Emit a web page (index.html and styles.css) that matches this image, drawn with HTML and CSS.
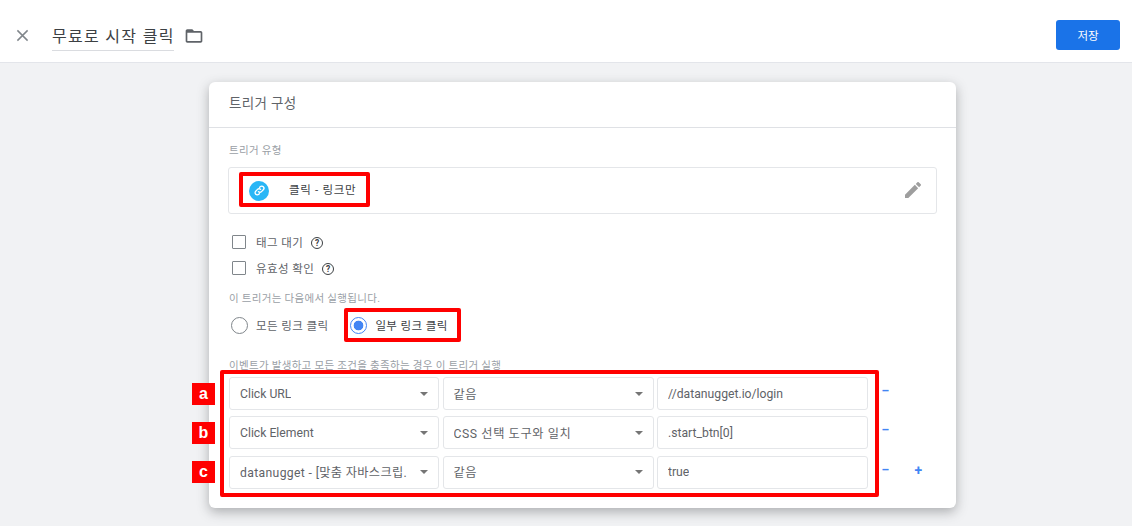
FILE: index.html
```html
<!DOCTYPE html>
<html lang="ko">
<head>
<meta charset="utf-8">
<title>무료로 시작 클릭</title>
<link rel="stylesheet" href="styles.css">
</head>
<body>
<header class="topbar">
  <svg class="close" viewBox="0 0 14 14" width="14" height="14"><path d="M1.5 1.5l11 11M12.5 1.5l-11 11" stroke="#80868b" stroke-width="1.6" fill="none"/></svg>
  <div class="title">무료로 시작 클릭</div>
  <svg class="folder" viewBox="0 0 24 24" width="20" height="20"><path fill="#5f6368" d="M20 6h-8l-2-2H4c-1.1 0-2 .9-2 2v12c0 1.1.9 2 2 2h16c1.1 0 2-.9 2-2V8c0-1.100-.9-2-2-2zm0 12H4V8h16v10z"/></svg>
  <button class="save">저장</button>
</header>
<main class="stage">
  <section class="card">
    <h2 class="card-title">트리거 구성</h2>
    <div class="card-body">
      <div class="caption">트리거 유형</div>
      <div class="type-box">
        <span class="type-icon">
          <svg viewBox="0 0 24 24" width="13" height="13"><path fill="none" stroke="#fff" stroke-width="2.400" stroke-linecap="round" d="M10 14a4 4 0 0 0 5.700 0l3.300-3.300a4 4 0 0 0-5.700-5.700l-1.300 1.300M14 10a4 4 0 0 0-5.700 0L5 13.300A4 4 0 0 0 10.700 19l1.300-1.300"/></svg>
        </span>
        <span class="type-name">클릭 - 링크만</span>
        <svg class="pencil" viewBox="3 3 18 18" width="16" height="16"><path fill="#9e9e9e" d="M3 17.250V21h3.750L17.810 9.940l-3.750-3.750L3 17.250zM20.710 7.040a1 1 0 0 0 0-1.410l-2.340-2.340a1 1 0 0 0-1.410 0l-1.830 1.830 3.750 3.750 1.830-1.830z"/></svg>
      </div>
      <div class="check-row first"><span class="checkbox"></span><span class="opt">태그 대기</span><span class="help">?</span></div>
      <div class="check-row"><span class="checkbox"></span><span class="opt">유효성 확인</span><span class="help">?</span></div>
      <div class="caption fires">이 트리거는 다음에서 실행됩니다.</div>
      <div class="radios">
        <span class="radio"></span><span class="opt">모든 링크 클릭</span>
        <span class="radio on"></span><span class="opt">일부 링크 클릭</span>
      </div>
      <div class="caption when">이벤트가 발생하고 모든 조건을 충족하는 경우 이 트리거 실행</div>
      <div class="rows">
        <div class="row">
          <div class="field sel"><span class="val">Click URL</span><i class="caret"></i></div>
          <div class="field sel"><span class="val ko">같음</span><i class="caret"></i></div>
          <div class="field"><span class="val">//datanugget.io/login</span></div>
          <div class="acts"><span class="act">–</span></div>
        </div>
        <div class="row">
          <div class="field sel"><span class="val">Click Element</span><i class="caret"></i></div>
          <div class="field sel"><span class="val ko">CSS 선택 도구와 일치</span><i class="caret"></i></div>
          <div class="field"><span class="val">.start_btn[0]</span></div>
          <div class="acts"><span class="act">–</span></div>
        </div>
        <div class="row">
          <div class="field sel"><span class="val mix">datanugget - [맞춤 자바스크립.</span><i class="caret"></i></div>
          <div class="field sel"><span class="val ko">같음</span><i class="caret"></i></div>
          <div class="field"><span class="val">true</span></div>
          <div class="acts"><span class="act">–</span><span class="act plus">+</span></div>
        </div>
      </div>
    </div>
  </section>
</main>
<div class="mark mark-type"></div>
<div class="mark mark-radio"></div>
<div class="mark mark-rows"></div>
<div class="tag tag-a">a</div>
<div class="tag tag-b">b</div>
<div class="tag tag-c">c</div>
</body>
</html>
```
FILE: styles.css
```css
* { box-sizing: border-box; }
html, body { margin: 0; height: 100%; }
body {
  position: relative;
  height: 526px;
  overflow: hidden;
  background: #f1f2f4;
  font-family: Roboto, "Noto Sans CJK KR", sans-serif;
  color: #5f6368;
}
.topbar {
  display: flex;
  align-items: center;
  height: 63px;
  padding: 0 12px 0 16px;
  background: #fff;
  border-bottom: 1px solid #e3e5ea;
}
.close { flex: none; margin-top: 9px; width: 13px; height: 13px; }
.title {
  margin-left: 23px;
  margin-top: 9px;
  width: 122px;
  height: 30px;
  line-height: 31px;
  font-size: 16px;
  letter-spacing: 1.3px;
  color: #3c4043;
  border-bottom: 1px solid #dadce0;
  white-space: nowrap;
}
.folder { flex: none; margin-left: 10px; margin-top: 9px; }
.save {
  margin-left: auto;
  margin-top: 8px;
  width: 64px;
  height: 30px;
  background: #1a73e8;
  color: #fff;
  border: 0;
  border-radius: 3px;
  font: 11.500px Roboto, "Noto Sans CJK KR", sans-serif;
}
.stage { display: flex; justify-content: center; padding: 19px 176px 0 209px; }
.card {
  width: 747px;
  height: 426px;
  background: #fff;
  border-radius: 6px;
  box-shadow: 0 4px 12px rgba(60, 64, 67, .38);
}
.card-title {
  margin: 0;
  height: 46px;
  padding: 0 20px;
  line-height: 43px;
  font-size: 13.500px;
  font-weight: 400;
  color: #5f6368;
  letter-spacing: 0.35px;
  border-bottom: 1px solid #dfe1e5;
}
.card-body { padding: 17px 19px 0 19px; }
.caption { font-size: 10.500px; line-height: 12px; color: #9aa0a6; letter-spacing: 0.3px; margin-left: 1px; }
.type-box {
  display: flex;
  align-items: center;
  height: 47px;
  margin-top: 10px;
  padding: 0 15px 0 20px;
  border: 1px solid #e4e6e9;
  border-radius: 3px;
}
.type-icon {
  flex: none;
  display: flex;
  align-items: center;
  justify-content: center;
  width: 20px;
  height: 20px;
  border-radius: 50%;
  background: #29b6f6;
}
.type-name { margin: 0 0 4px 20px; font-size: 11.500px; color: #3c4043; letter-spacing: 0.7px; }
.pencil { margin-left: auto; margin-bottom: 1px; }
.check-row { display: flex; align-items: center; height: 14px; margin-top: 12px; padding-left: 4px; }
.check-row.first { margin-top: 21px; }
.checkbox { flex: none; width: 14px; height: 14px; border: 1.500px solid #80868b; border-radius: 1px; }
.opt { margin-left: 10px; font-size: 11.500px; color: #5f6368; letter-spacing: 0.4px; white-space: nowrap; }
.help {
  display: flex;
  align-items: center;
  justify-content: center;
  width: 12px;
  height: 12px;
  margin: 1px 0 0 8px;
  border: 1.300px solid #3c4043;
  border-radius: 50%;
  font-size: 8.500px;
  font-weight: 700;
  color: #3c4043;
}
.caption.fires { margin-top: 18px; }
.radios { display: flex; align-items: center; height: 18px; margin-top: 11px; padding-left: 3px; }
.radio { flex: none; width: 17px; height: 17px; border: 1.500px solid #80868b; border-radius: 50%; }
.radio.on {
  margin-left: 22px;
  border-color: #4285f4;
  background: radial-gradient(circle, #4285f4 0 4.500px, #fff 5.200px);
}
.radios .opt { margin-left: 8px; }
.radios .radio.on + .opt { margin-left: 8px; color: #3c4043; }
.caption.when { margin-top: 26px; }
.rows { display: flex; flex-direction: column; gap: 6.300px; margin-top: 5px; margin-left: 1px; }
.row { display: grid; grid-template-columns: 210px 211px 211px 60px; column-gap: 3.500px; height: 33px; }
.field {
  display: flex;
  align-items: center;
  padding: 0 10px;
  border: 1px solid #e4e6e9;
  border-radius: 3px;
  font-size: 12.200px;
  color: #5f6368;
  white-space: nowrap;
  background: #fff;
}
.val { overflow: hidden; }
.val.ko { letter-spacing: 0.6px; }
.val.mix { letter-spacing: 0.35px; }
.caret {
  margin-left: auto;
  flex: none;
  width: 0;
  height: 0;
  border: 4px solid transparent;
  border-top: 4px solid #757575;
  border-bottom: 0;
}
.acts { display: flex; align-items: flex-start; padding-left: 10px; }
.act { flex: none; color: #4285f4; font-size: 12px; font-weight: 700; line-height: 28px; width: 33px; }
.plus { font-size: 14px; line-height: 29px; }
.mark { position: absolute; border: 4px solid #f00; border-radius: 2px; }
.mark-type { left: 239px; top: 172px; width: 131px; height: 35px; }
.mark-radio { left: 344px; top: 308px; width: 117px; height: 34px; }
.mark-rows { left: 220px; top: 370px; width: 659px; height: 127px; }
.tag {
  position: absolute;
  left: 192px;
  width: 23px;
  height: 22px;
  background: #f00;
  color: #fff;
  font: 700 16px/21px "Liberation Sans", sans-serif;
  text-align: center;
}
.tag-a { top: 383px; }
.tag-b { top: 422px; }
.tag-c { top: 461px; }
```
